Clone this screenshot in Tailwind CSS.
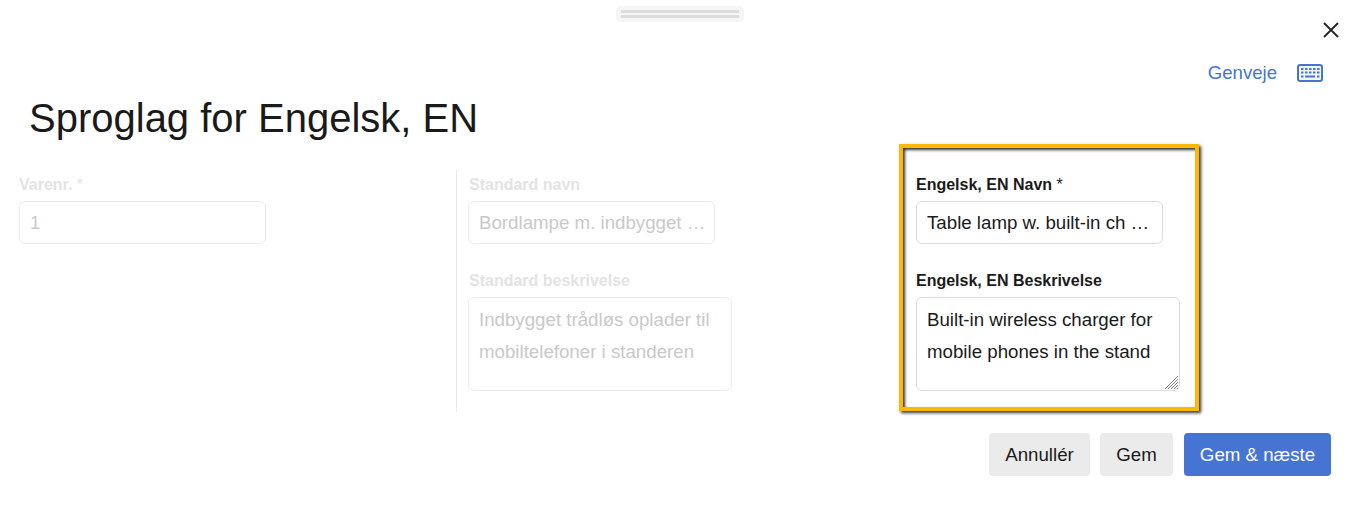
<!DOCTYPE html>
<html>
<head>
<meta charset="utf-8">
<script src="https://cdn.jsdelivr.net/npm/@tailwindcss/browser@4"></script>
</head>
<body class="bg-white font-['Liberation_Sans',Arial,sans-serif] text-[#1a1a1a] overflow-hidden">
<div class="relative h-[505px] w-[1361px]">
  <div class="absolute left-[616px] top-[6px] w-[128px] h-[16px] rounded-[5px] bg-[#f5f5f5] flex flex-col gap-[2px] items-center pt-[4px]">
    <div class="w-[118px] h-[3px] bg-[#dcdcdc]"></div>
    <div class="w-[118px] h-[3px] bg-[#dcdcdc]"></div>
  </div>
  <button class="absolute left-[1323px] top-[22px] w-[16px] h-[16px]">
    <svg viewBox="0 0 16 16" class="w-[16px] h-[16px]" fill="none" stroke="#222" stroke-width="1.8"><path d="M1 1L15 15M15 1L1 15"/></svg>
  </button>

  <div class="flex items-center justify-end pt-[62px] pr-[38px] h-[84px]">
    <span class="text-[18.6px] leading-[22px] text-[#4674d3] mr-[20px]">Genveje</span>
    <svg viewBox="0 0 26 18" class="w-[26px] h-[18px]" fill="none">
      <rect x="1" y="1" width="24" height="16" rx="2" fill="#f4f7fd" stroke="#4674d3" stroke-width="2"/>
      <path d="M4 5h18.5M4 8.5h18.5" stroke="#4674d3" stroke-width="2" stroke-dasharray="2.5 1.5"/>
      <path d="M4 12.5h2.5M8 12.5h10M20 12.5h2.5" stroke="#4674d3" stroke-width="2"/>
    </svg>
  </div>

  <h1 class="pl-[29px] mt-[8px] text-[40px] leading-[52px] font-normal h-[52px]">Sproglag for Engelsk, EN</h1>

  <div class="flex h-[267px]">
    <div class="w-[437px] ml-[19px] pt-[31px]">
      <label class="block text-[16px] leading-[20px] font-bold text-[#e3e3e3]">Varenr. <span class="font-normal">*</span></label>
      <input disabled value="1" class="block mt-[6px] w-[247px] h-[43px] border border-[#ebebeb] rounded-[6px] px-[10px] text-[18.7px] text-[#c9c9c9] bg-white"/>
    </div>
    <div class="w-[443px] mt-[25px] h-[243px] border-l border-[#e9e9e9] pl-[11px] pt-[6px]">
      <label class="block text-[16px] leading-[20px] font-bold text-[#e3e3e3] pl-px">Standard navn</label>
      <input disabled value="Bordlampe m. indbygget …" class="block mt-[6px] w-[247px] h-[43px] border border-[#ebebeb] rounded-[6px] px-[10px] text-[18.7px] text-[#c9c9c9] bg-white"/>
      <label class="block text-[16px] leading-[20px] font-bold text-[#e3e3e3] mt-[27px] pl-px">Standard beskrivelse</label>
      <textarea disabled class="block mt-[6px] w-[264px] h-[94px] border border-[#ebebeb] rounded-[6px] px-[10px] py-[6px] text-[18.7px] leading-[32px] text-[#c9c9c9] bg-white resize-none">Indbygget trådløs oplader til mobiltelefoner i standeren</textarea>
    </div>
    <div class="w-[300px] h-[267px] border-4 border-[#fdb900] pl-[13px] pt-[27px] shadow-[2px_2px_3px_#333,inset_2px_2px_3px_#333] bg-white">
      <label class="block text-[16px] leading-[20px] font-bold text-[#1a1a1a]">Engelsk, EN Navn <span class="font-normal">*</span></label>
      <input value="Table lamp w. built-in ch …" class="block mt-[6px] w-[247px] h-[43px] border border-[#dcdcdc] rounded-[6px] px-[10px] text-[18.7px] text-[#1a1a1a] bg-white"/>
      <label class="block text-[16px] leading-[20px] font-bold text-[#1a1a1a] mt-[27px]">Engelsk, EN Beskrivelse</label>
      <div class="relative mt-[6px] w-[264px] h-[94px]">
        <textarea class="block w-[264px] h-[94px] border border-[#dcdcdc] rounded-[6px] px-[10px] py-[6px] text-[18.7px] leading-[32px] text-[#1a1a1a] bg-white resize-none">Built-in wireless charger for mobile phones in the stand</textarea>
        <svg viewBox="0 0 15 15" class="absolute right-[1px] bottom-[1px] w-[15px] h-[15px]" fill="none" stroke="#808080" stroke-width="1"><path d="M1 14L14 1M4 14L14 4M7 14L14 7M10 14L14 10M13 14L14 13"/></svg>
      </div>
    </div>
  </div>

  <div class="flex justify-end pr-[30px] mt-[22px] text-[18.7px]">
    <button class="h-[43px] w-[101px] pt-px rounded-[4px] bg-[#ebebeb] text-[#1a1a1a]">Annullér</button>
    <button class="h-[43px] w-[73px] pt-px ml-[10px] rounded-[4px] bg-[#ebebeb] text-[#1a1a1a]">Gem</button>
    <button class="h-[43px] w-[147px] pt-px ml-[11px] rounded-[4px] bg-[#4674d3] text-white">Gem &amp; næste</button>
  </div>
</div>
</body>
</html>
